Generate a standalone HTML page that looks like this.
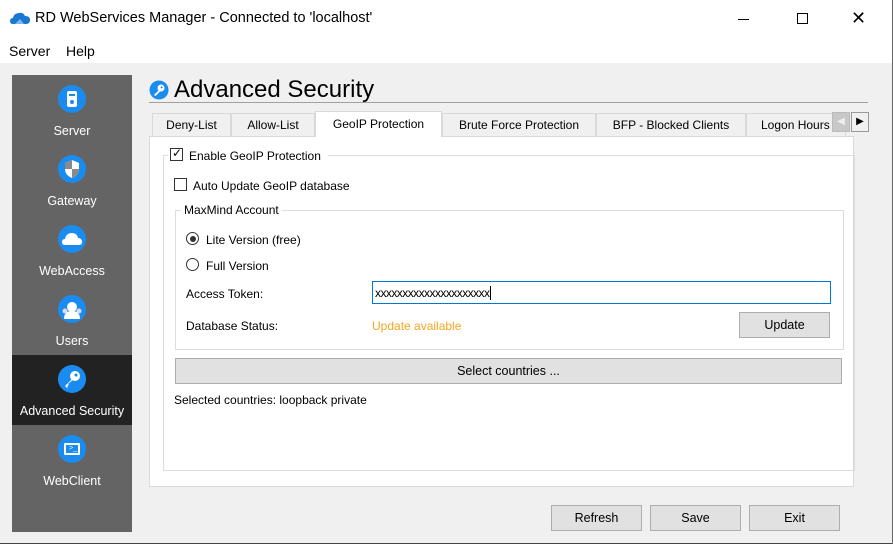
<!DOCTYPE html>
<html><head><meta charset="utf-8"><style>
*{box-sizing:border-box;margin:0;padding:0}
body{width:893px;height:544px;overflow:hidden;background:#f0f0f0;font-family:"Liberation Sans",sans-serif;font-size:12px;color:#000;position:relative}
.a{position:absolute}
.title{left:0;top:0;width:893px;height:40px;background:#fff}
.menu{left:0;top:40px;width:893px;height:23px;background:#fff}
.side{left:12px;top:75px;width:120px;height:457px;background:#646464}
.item{position:absolute;left:0;width:120px;height:70px;color:#fff;text-align:center;font-size:12.5px}
.item .ic{position:absolute;left:46px;top:10px;width:28px;height:28px;border-radius:50%;background:#1a8cf0}
.item span{position:absolute;left:0;right:0;top:49px}
.tab{position:absolute;top:113px;height:23px;border:1px solid #d9d9d9;border-bottom:none;background:#f0f0f0;font-size:12px;text-align:center;line-height:23px}
.btn{position:absolute;background:#e1e1e1;border:1px solid #adadad;text-align:center;font-size:12.5px}
.cb{position:absolute;width:13px;height:13px;border:1px solid #333;background:#fff}
.rb{position:absolute;width:13px;height:13px;border:1px solid #333;border-radius:50%;background:#fff}
.grp{position:absolute;border:1px solid #dcdcdc}
</style></head><body>
<div class="a title">
 <svg class="a" style="left:10px;top:11px" width="20" height="14" viewBox="0 0 20 14"><path d="M3 13 Q0 13 0 10 Q0 7 3 7 Q4 2 9 2 Q13 1 15 5 Q20 5 20 9 Q20 13 16 13Z" fill="#1a78d0"/><path d="M5 13 L10 8 L14 13Z" fill="#7ab8ec"/></svg>
 <div class="a" style="left:35px;top:10px;font-size:14.5px">RD WebServices Manager - Connected to 'localhost'</div>
 <div class="a" style="left:738px;top:19px;width:11px;height:1px;background:#000"></div>
 <div class="a" style="left:797px;top:13px;width:11px;height:11px;border:1px solid #000"></div>
 <div class="a" style="left:851px;top:8px;font-size:18px;font-weight:300">✕</div>
</div>
<div class="a menu"><span class="a" style="left:9px;top:3px;font-size:14px">Server</span><span class="a" style="left:66px;top:3px;font-size:14px">Help</span></div>
<div class="a side">
 <div class="item" style="top:0"><div class="ic"><div class="a" style="left:9px;top:6px;width:10px;height:16px;background:#fff;border-radius:2px"></div><div class="a" style="left:11px;top:9px;width:6px;height:2px;background:#1a8cf0"></div><div class="a" style="left:12px;top:15px;width:4px;height:4px;border-radius:50%;background:#1a8cf0"></div></div><span>Server</span></div>
 <div class="item" style="top:70px"><div class="ic"><svg class="a" style="left:7px;top:5px" width="14" height="18"><path d="M7 0 L14 3 L14 9 Q14 15 7 18 Q0 15 0 9 L0 3Z" fill="#fff"/><path d="M7 9 L14 9 Q14 15 7 18Z M7 0 L0 3 L0 9 L7 9Z" fill="#8a8a8a"/></svg></div><span>Gateway</span></div>
 <div class="item" style="top:140px"><div class="ic"><svg class="a" style="left:4px;top:7px" width="20" height="13"><path d="M3 13 Q0 13 0 10 Q0 7 3 7 Q4 1 10 1 Q15 1 16 6 Q20 6 20 10 Q20 13 17 13Z" fill="#fff"/></svg></div><span>WebAccess</span></div>
 <div class="item" style="top:210px"><div class="ic"><svg class="a" style="left:3px;top:4px" width="22" height="22"><circle cx="11" cy="8" r="5" fill="#fff"/><path d="M3 20 Q3 12 11 12 Q19 12 19 20Z" fill="#fff"/><circle cx="4" cy="12" r="2.5" fill="#ddd"/><circle cx="18" cy="12" r="2.5" fill="#ddd"/></svg></div><span>Users</span></div>
 <div class="item" style="top:280px;background:#222"><div class="ic"><svg class="a" style="left:5px;top:5px" width="18" height="18"><circle cx="12" cy="6" r="5" fill="#fff"/><circle cx="13" cy="5" r="1.5" fill="#1a8cf0"/><path d="M9 9 L2 16 L4 18 L5 17 L4 16 L6 15 L5 14 L11 9Z" fill="#fff"/></svg></div><span>Advanced Security</span></div>
 <div class="item" style="top:350px"><div class="ic"><div class="a" style="left:6px;top:8px;width:16px;height:12px;border:2px solid #fff;border-radius:1px"></div><div class="a" style="left:11px;top:10px;color:#fff;font-size:7px">&gt;_</div></div><span>WebClient</span></div>
</div>
<svg class="a" style="left:149px;top:80px" width="20" height="20"><circle cx="10" cy="10" r="9.5" fill="#1a8cf0"/><circle cx="12" cy="8" r="3.5" fill="#fff"/><circle cx="12.6" cy="7.4" r="1" fill="#1a8cf0"/><path d="M10 10 L5 15 L6.5 16 L11.5 11Z" fill="#fff"/></svg>
<div class="a" style="left:174px;top:76px;font-size:24px">Advanced Security</div>
<div class="a" style="left:149px;top:102px;width:719px;height:1px;background:#a0a0a0"></div>
<div class="a" style="left:149px;top:136px;width:705px;height:351px;background:#fff;border:1px solid #d9d9d9"></div>
<div class="tab" style="left:152px;width:79px">Deny-List</div>
<div class="tab" style="left:231px;width:84px">Allow-List</div>
<div class="tab" style="left:315px;top:111px;height:26px;width:127px;background:#fff;line-height:25px;z-index:2">GeoIP Protection</div>
<div class="tab" style="left:442px;width:154px">Brute Force Protection</div>
<div class="tab" style="left:596px;width:150px">BFP - Blocked Clients</div>
<div class="tab" style="left:746px;width:100px;text-align:left;padding-left:14px;overflow:hidden">Logon Hours</div>
<div class="a" style="left:832px;top:112px;width:18px;height:20px;background:#c8c8c8;border:1px solid #bbb;color:#eee;font-size:10px;text-align:center;line-height:18px">◀</div>
<div class="a" style="left:851px;top:112px;width:18px;height:20px;background:#f0f0f0;border:1px solid #999;font-size:10px;text-align:center;line-height:18px">▶</div>
<div class="grp" style="left:163px;top:155px;width:692px;height:316px"></div>
<div class="a" style="left:168px;top:147px;width:160px;height:16px;background:#fff"></div>
<div class="cb" style="left:170px;top:148px"><span class="a" style="left:1px;top:-3px;font-size:12px">✓</span></div>
<div class="a" style="left:189px;top:149px">Enable GeoIP Protection</div>
<div class="cb" style="left:174px;top:178px"></div>
<div class="a" style="left:193px;top:179px">Auto Update GeoIP database</div>
<div class="grp" style="left:175px;top:210px;width:669px;height:140px"></div>
<div class="a" style="left:181px;top:203px;padding:0 3px;background:#fff">MaxMind Account</div>
<div class="rb" style="left:186px;top:232px"><div class="a" style="left:2.5px;top:2.5px;width:6px;height:6px;border-radius:50%;background:#333"></div></div>
<div class="a" style="left:206px;top:233px">Lite Version (free)</div>
<div class="rb" style="left:186px;top:258px"></div>
<div class="a" style="left:206px;top:259px">Full Version</div>
<div class="a" style="left:186px;top:287px">Access Token:</div>
<div class="a" style="left:372px;top:281px;width:459px;height:23px;border:1px solid #0078d7;padding:4px 0 0 2px;font-size:12px;letter-spacing:-0.55px">xxxxxxxxxxxxxxxxxxxxx<span style="border-left:1px solid #000;margin-left:1px"></span></div>
<div class="a" style="left:186px;top:319px">Database Status:</div>
<div class="a" style="left:372px;top:319px;color:#f5a623">Update available</div>
<div class="btn" style="left:739px;top:312px;width:91px;height:26px;line-height:25px">Update</div>
<div class="btn" style="left:175px;top:358px;width:667px;height:26px;line-height:25px">Select countries ...</div>
<div class="a" style="left:174px;top:393px">Selected countries: loopback private</div>
<div class="btn" style="left:551px;top:505px;width:91px;height:26px;line-height:25px">Refresh</div>
<div class="btn" style="left:650px;top:505px;width:91px;height:26px;line-height:25px">Save</div>
<div class="btn" style="left:749px;top:505px;width:91px;height:26px;line-height:25px">Exit</div>
<div class="a" style="left:0;top:543px;width:893px;height:1px;background:#444"></div>
<div class="a" style="left:892px;top:0;width:1px;height:544px;background:#666"></div>
</body></html>
